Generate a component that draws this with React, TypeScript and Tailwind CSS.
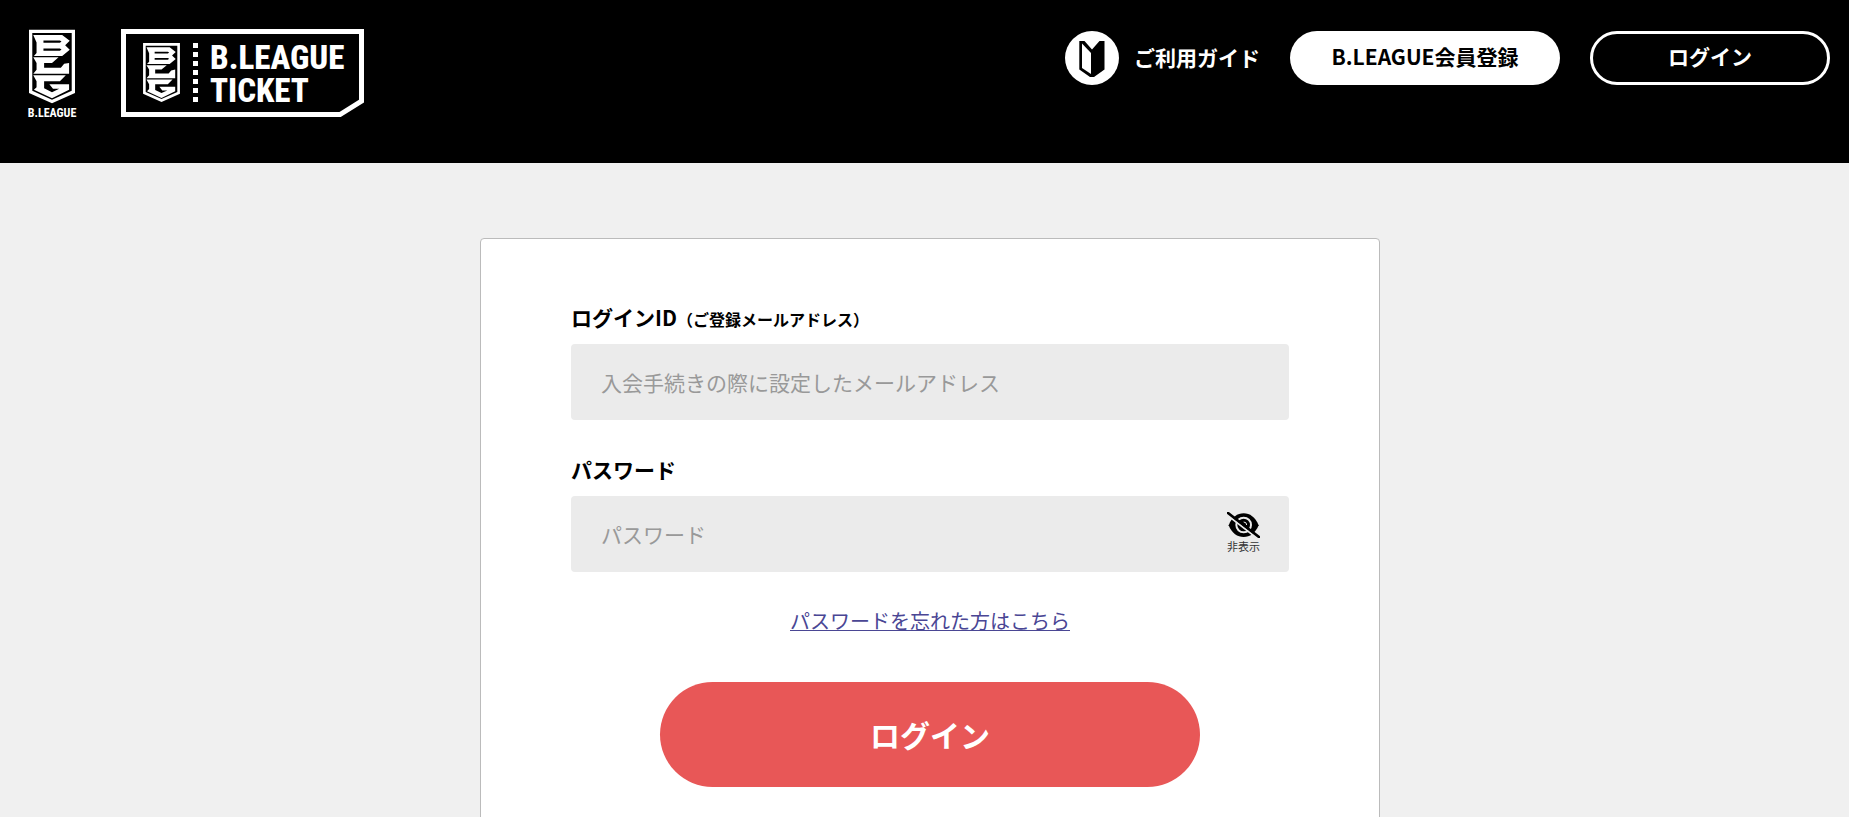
import { useState } from "react";

function Emblem({ className }: { className: string }) {
  return (
    <svg viewBox="0 0 140 224" className={className} aria-hidden="true">
      <path
        fill="#fff"
        fillRule="evenodd"
        d="M0 0H140V193L70 224L0 193ZM10 10V186L70 213L130 186V10Z"
      />
      <path
        fill="#fff"
        fillRule="evenodd"
        d="M13 16H101L124 34L110 47L124 61L101 80H15L23 71V39ZM44 33V40H94L99 36L94 33ZM44 57V64H94L99 60L94 57Z"
      />
      <path fill="#fff" d="M13 84H90L70 101H46V116H97L107 104L122 101V134H13L23 122V101Z" />
      <path
        fill="#fff"
        d="M13 139H112L94 157H46V178L70 190L92 180H73L62 166H122V183L70 209L15 183L23 175V157Z"
      />
    </svg>
  );
}

function TicketFrame() {
  const dots = [0, 1, 2, 3, 4, 5, 6];
  return (
    <svg viewBox="0 0 243 88" className="absolute inset-0 size-full" aria-hidden="true">
      <path d="M2.5 2.5H240.5V72L219 85.5H2.5Z" fill="none" stroke="#fff" strokeWidth="5" />
      {dots.map((i) => (
        <rect key={i} x="72" y={14 + i * 9} width="5" height="5" fill="#fff" />
      ))}
    </svg>
  );
}

function BeginnerMark() {
  return (
    <svg viewBox="0 0 54 54" className="size-[54px]" aria-hidden="true">
      <circle cx="27" cy="27" r="27" fill="#fff" />
      <path d="M14.3 10H19.5L27 18.5L34.5 10H39.5V38.5L29 46H25L14.3 38.5Z" fill="#000" />
      <path d="M17 12.5L26 22V43L17 37Z" fill="#fff" />
    </svg>
  );
}

function EyeOff() {
  return (
    <svg viewBox="0 0 99 78" className="h-[26px] w-[33px]" aria-hidden="true">
      <path d="M5 40C15 15 31 4 50 4S84 15 95 40C84 65 69 75 50 75S15 65 5 40Z" fill="#000" />
      <circle cx="50" cy="39" r="22" fill="none" stroke="#ebebeb" strokeWidth="6" />
      <path d="M50 30A9 9 0 0 1 59 39" fill="none" stroke="#ebebeb" strokeWidth="3" />
      <path d="M-2 7L91 79" stroke="#ebebeb" strokeWidth="6" />
      <path d="M3 3L96 75" stroke="#000" strokeWidth="8" strokeLinecap="round" />
    </svg>
  );
}

const inputClass =
  "block h-[76px] w-full rounded-[4px] bg-[#ebebeb] pl-[30px] pr-[90px] text-[21px] text-black outline-none placeholder:text-[#999]";
const labelClass = "mb-[9px] flex items-baseline text-[21px] leading-[36px] font-bold";

export default function App() {
  const [visible, setVisible] = useState(false);

  return (
    <div className="min-h-screen bg-[#f0f0f0] text-black [font-family:'Noto_Sans_CJK_JP',sans-serif]">
      <header className="flex h-[163px] items-start justify-between bg-black pl-[29px] pr-[19px] text-white">
        <div className="flex gap-[46px] pt-[29px]">
          <a href="#" className="flex w-[46px] flex-col items-center">
            <Emblem className="h-[75px] w-[46px]" />
            <span className="mt-[2px] text-[12px] leading-[14px] font-bold [font-family:'Roboto_Condensed','Liberation_Sans_Narrow',sans-serif]">
              B.LEAGUE
            </span>
          </a>
          <a href="#" className="relative flex h-[88px] w-[243px] pl-[22px] pt-[14px]">
            <TicketFrame />
            <Emblem className="h-[59px] w-[37px]" />
            <span className="-mt-[2px] ml-[30px] flex flex-col text-[33px] leading-[33px] font-extrabold [font-family:'Roboto_Condensed','Liberation_Sans_Narrow',sans-serif]">
              <span>B.LEAGUE</span>
              <span>TICKET</span>
            </span>
          </a>
        </div>
        <nav className="flex items-center gap-[30px] pt-[31px] text-[21px] font-bold">
          <a href="#" className="flex items-center gap-[15px]">
            <BeginnerMark />
            ご利用ガイド
          </a>
          <a
            href="#"
            className="flex h-[54px] w-[270px] items-center justify-center rounded-full bg-white pb-[2px] text-black"
          >
            B.LEAGUE会員登録
          </a>
          <a
            href="#"
            className="flex h-[54px] w-[240px] items-center justify-center rounded-full border-3 border-white pb-[2px]"
          >
            ログイン
          </a>
        </nav>
      </header>

      <main className="pt-[75px] pl-[11px]">
        <form
          className="mx-auto w-full max-w-[900px] rounded-t-[4px] border border-[#bbb] bg-white px-[90px] pt-[60px] pb-[60px]"
          onSubmit={(e) => e.preventDefault()}
        >
          <label htmlFor="login-id" className={labelClass}>
            ログインID<span className="text-[16px] leading-[20px]">（ご登録メールアドレス）</span>
          </label>
          <input
            id="login-id"
            type="text"
            placeholder="入会手続きの際に設定したメールアドレス"
            className={inputClass}
          />

          <label htmlFor="password" className={`mt-[31px] ${labelClass}`}>
            パスワード
          </label>
          <div className="relative">
            <input
              id="password"
              type={visible ? "text" : "password"}
              placeholder="パスワード"
              className={inputClass}
            />
            <button
              type="button"
              onClick={() => setVisible(!visible)}
              className="absolute top-[16px] right-[29px] flex flex-col items-center text-[11px] leading-[16px] text-[#333]"
            >
              <EyeOff />
              非表示
            </button>
          </div>

          <p className="mt-[34px] text-center text-[20px] leading-[30px]">
            <a href="#" className="text-[#4a4694] underline decoration-1">
              パスワードを忘れた方はこちら
            </a>
          </p>

          <button
            type="submit"
            className="mx-auto mt-[46px] block h-[105px] w-full max-w-[540px] rounded-full bg-[#e85757] text-[30px] font-bold text-white"
          >
            ログイン
          </button>
        </form>
      </main>
    </div>
  );
}
